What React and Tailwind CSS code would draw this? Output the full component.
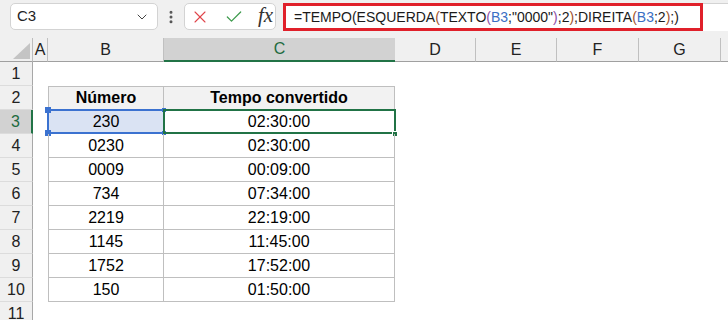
import React from "react";
import { ChevronDown, X, Check, EllipsisVertical } from "lucide-react";

const widths = { A: "w-[15px]", B: "w-[116px]", C: "w-[231px]", D: "w-[81px]", E: "w-[81px]", F: "w-[82px]", G: "w-[82px]" };
const letters = ["A", "B", "C", "D", "E", "F", "G"];

const data = [
  ["230", "02:30:00"],
  ["0230", "02:30:00"],
  ["0009", "00:09:00"],
  ["734", "07:34:00"],
  ["2219", "22:19:00"],
  ["1145", "11:45:00"],
  ["1752", "17:52:00"],
  ["150", "01:50:00"],
];

function Formula() {
  const k = "text-[#1a1a1a]";
  const b = "text-[#3a6fc4]";
  const p1 = "text-[#a0522d]";
  const p2 = "text-[#8e4fa8]";
  return (
    <span className="text-[14px] whitespace-nowrap">
      <span className={k}>=TEMPO(ESQUERDA</span>
      <span className={p1}>(</span>
      <span className={k}>TEXTO</span>
      <span className={p2}>(</span>
      <span className={b}>B3</span>
      <span className={k}>;"0000"</span>
      <span className={p2}>)</span>
      <span className={k}>;2</span>
      <span className={p1}>)</span>
      <span className={k}>;DIREITA</span>
      <span className={p1}>(</span>
      <span className={b}>B3</span>
      <span className={k}>;2</span>
      <span className={p1}>)</span>
      <span className={k}>;)</span>
    </span>
  );
}

function RowHeader({ n, selected }) {
  return (
    <div
      className={
        "w-[33px] shrink-0 h-full flex items-center justify-center text-[16px] border-b border-[#dcdcdc] " +
        (selected
          ? "bg-[#d2d2d2] text-[#1e6b3f] border-r-2 border-r-[#217346]"
          : "bg-[#f0f0f0] text-[#222] border-r border-r-[#a8a8a8]")
      }
    >
      {n}
    </div>
  );
}

export default function App() {
  return (
    <div className="w-[728px] h-[320px] overflow-hidden bg-white" style={{ fontFamily: '"Liberation Sans", Arial, sans-serif' }}>
      {/* Toolbar */}
      <div className="h-[38px] bg-[#f0f0f0] flex items-start pt-[3px]">
        <div className="ml-[10px] w-[148px] h-[27px] bg-white border border-[#d3d3d3] rounded-[5px] flex items-center pl-[6px] pr-[7px]">
          <span className="text-[15px] text-[#222] flex-1">C3</span>
          <ChevronDown size={16} strokeWidth={1.5} color="#444" />
        </div>
        <div className="w-[26px] h-[27px] flex items-center justify-center">
          <EllipsisVertical size={16} strokeWidth={2.5} color="#555" />
        </div>
        <div className="w-[92px] h-[27px] bg-white border border-[#d3d3d3] rounded-[5px] flex items-center pl-[5px] gap-[14px]">
          <X size={20} strokeWidth={1.3} color="#e0454b" />
          <Check size={20} strokeWidth={1.5} color="#3d9a4c" />
          <span className="text-[21px] italic text-[#333] leading-none -mt-[2px]" style={{ fontFamily: '"Liberation Serif", serif' }}>fx</span>
        </div>
        <div className="ml-[7px] flex-1 h-[28px] bg-white border-t border-[#d3d3d3] flex">
          <div className="w-[420px] h-[28px] -mt-px border-[3px] border-[#e0202a] flex items-center pl-[8px]">
            <Formula />
          </div>
        </div>
      </div>

      {/* Column headers */}
      <div className="flex h-[24px] bg-[#f0f0f0]">
        <div className="w-[33px] shrink-0 h-full border-r border-[#bdbdbd] border-b border-b-[#a0a0a0] flex items-end justify-end pr-[2px] pb-[2px]">
          <svg width="17" height="16" viewBox="0 0 17 16">
            <polygon points="17,0 17,16 0,16" fill="#c4c4c4" />
          </svg>
        </div>
        {letters.map((l) => (
          <div
            key={l}
            className={
              widths[l] +
              " shrink-0 h-full flex items-center justify-center text-[16px] " +
              (l === "C"
                ? "bg-[#d2d2d2] text-[#1e6b3f] border-b-2 border-b-[#217346]"
                : "text-[#222] border-r border-r-[#c0c0c0] border-b border-b-[#a0a0a0]")
            }
          >
            {l}
          </div>
        ))}
        <div className="flex-1 h-full border-b border-b-[#a0a0a0]" />
      </div>

      {/* Row 1 */}
      <div className="flex h-[24px]">
        <RowHeader n={1} />
        <div className="flex-1" />
      </div>

      {/* Row 2 : table header */}
      <div className="flex h-[24px]">
        <RowHeader n={2} />
        <div className="w-[15px] shrink-0" />
        <div className="w-[116px] shrink-0 h-full border border-[#bfbfbf] bg-[#f2f2f2] flex items-center justify-center text-[16px] font-bold text-black">
          Número
        </div>
        <div className="w-[231px] shrink-0 h-full border-t border-b border-r border-[#bfbfbf] bg-[#f2f2f2] flex items-center justify-center text-[16px] font-bold text-black">
          Tempo convertido
        </div>
        <div className="flex-1" />
      </div>

      {data.map(([num, time], i) => {
        const rowNo = i + 3;
        const sel = rowNo === 3;
        return (
          <div key={rowNo} className="flex h-[24px]">
            <RowHeader n={rowNo} selected={sel} />
            <div className="w-[15px] shrink-0" />
            <div
              className={
                "relative w-[116px] shrink-0 h-full border-l border-r border-b border-[#bfbfbf] flex items-center justify-center text-[16px] text-black " +
                (sel ? "bg-[#dae3f3]" : "")
              }
            >
              {num}
              {sel && (
                <>
                  <div className="absolute -left-[2px] -top-[1px] w-[118px] h-[25px] border-2 border-[#3b72d0] pointer-events-none" />
                  <div className="absolute -left-[4px] -top-[3px] w-[6px] h-[6px] bg-[#3b72d0]" />
                  <div className="absolute -left-[4px] -bottom-[3px] w-[6px] h-[6px] bg-[#3b72d0]" />
                  <div className="absolute -right-[3px] -top-[2px] w-[4px] h-[4px] bg-[#3b72d0]" />
                  <div className="absolute -right-[3px] -bottom-[2px] w-[4px] h-[4px] bg-[#3b72d0]" />
                </>
              )}
            </div>
            <div className="relative w-[231px] shrink-0 h-full border-r border-b border-[#bfbfbf] flex items-center justify-center text-[16px] text-black">
              {time}
              {sel && (
                <>
                  <div className="absolute -left-[1px] -top-[1px] w-[233px] h-[25px] border-2 border-[#217346] pointer-events-none" />
                  <div className="absolute -right-[4px] -bottom-[4px] w-[6px] h-[6px] bg-[#217346] border border-white" />
                </>
              )}
            </div>
            <div className="flex-1" />
          </div>
        );
      })}

      {/* Row 11 */}
      <div className="flex h-[24px]">
        <RowHeader n={11} />
        <div className="flex-1" />
      </div>
    </div>
  );
}
